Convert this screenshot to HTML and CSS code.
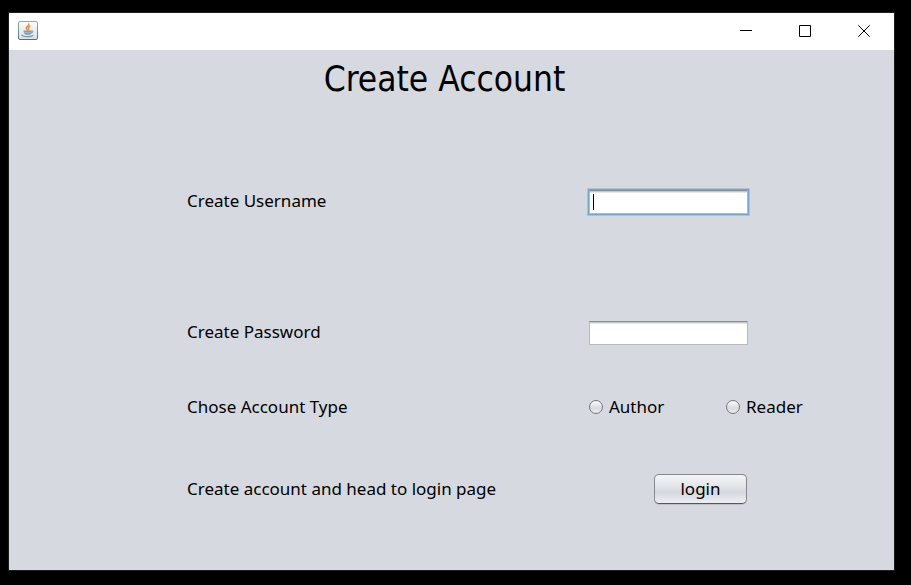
FILE: index.html
```html
<!DOCTYPE html>
<html lang="en">
<head>
<meta charset="utf-8">
<title>Create Account</title>
<link rel="stylesheet" href="styles.css">
</head>
<body>
<div class="window">
  <header class="titlebar">
    <svg class="app-icon" viewBox="0 0 20 19" aria-hidden="true">
      <defs>
        <linearGradient id="tile" x1="0" y1="0" x2="0" y2="1">
          <stop offset="0" stop-color="#fbfbfb"/>
          <stop offset="1" stop-color="#dcdee0"/>
        </linearGradient>
        <linearGradient id="edge" x1="0" y1="0" x2="0" y2="1">
          <stop offset="0" stop-color="#8fa9bb"/>
          <stop offset="1" stop-color="#4f7186"/>
        </linearGradient>
      </defs>
      <rect x=".5" y=".5" width="19" height="18" rx="1.5" fill="url(#tile)" stroke="url(#edge)"/>
      <path d="M10.8 3c.8 1.500-2.600 2.400-2.600 4 0 .9.700 1.300 1.100 2M11.800 5.200c-1.800.7-2.100 1.600-1.300 2.300.6.6.3 1.100-.3 1.600" fill="none" stroke="#ee9145" stroke-width="1.500" stroke-linecap="round"/>
      <path d="M5.500 9.600h8.300c0 2.400-1 3.900-2.300 4.100H7.700C6.400 13.300 5.500 11.800 5.500 9.600z" fill="#829bb0"/>
      <path d="M13.600 10c2-.5 2.100 1.500-.6 2" fill="none" stroke="#7390a8" stroke-width=".9"/>
      <path d="M6.500 11.400h6" stroke="#c7d2dc" stroke-width=".6"/>
      <path d="M3.800 14.200c1.500 2 9.500 1.900 11 .3" fill="none" stroke="#7896ae" stroke-width="1.200" stroke-linecap="round"/>
    </svg>
    <div class="controls">
      <button type="button" class="control" aria-label="Minimize"><svg viewBox="0 0 12 12"><path d="M0 5.500h12"/></svg></button>
      <button type="button" class="control" aria-label="Maximize"><svg viewBox="0 0 12 12"><path d="M.5.5h11v11H.5z"/></svg></button>
      <button type="button" class="control" aria-label="Close"><svg viewBox="0 0 12 12"><path d="M.3.3l11.400 11.400M11.700.3L.3 11.700"/></svg></button>
    </div>
  </header>
  <main class="content">
    <h1>Create Account</h1>
    <form class="form">
      <div class="row row-username">
        <label class="name" for="username">Create Username</label>
        <input class="field" id="username" type="text" placeholder=" " autocomplete="off" autofocus>
      </div>
      <div class="row row-password">
        <label class="name" for="password">Create Password</label>
        <input class="field" id="password" type="password" placeholder=" ">
      </div>
      <div class="row row-type" role="radiogroup" aria-labelledby="type">
        <span class="name" id="type">Chose Account Type</span>
        <div class="options">
          <label class="option"><input type="radio" name="type" value="author">Author</label>
          <label class="option"><input type="radio" name="type" value="reader">Reader</label>
        </div>
      </div>
      <div class="row">
        <span class="name">Create account and head to login page</span>
        <div class="action"><button type="button" class="login">login</button></div>
      </div>
    </form>
  </main>
</div>
</body>
</html>
```
FILE: styles.css
```css
* {
  box-sizing: border-box;
}

body {
  margin: 0;
  min-height: 100vh;
  padding: 12px 16px 14px 8px;
  display: flex;
  background: #000;
  color: #000;
  font-family: Tahoma, "Noto Sans", sans-serif;
  font-size: 17px;
  line-height: 24px;
}

.window {
  flex: 1;
  display: flex;
  flex-direction: column;
  border: 1px solid #1c1c1e;
  background: #d6d9e0;
}

.titlebar {
  display: flex;
  justify-content: space-between;
  align-items: flex-start;
  height: 37px;
  padding: 8px 1px 0 9px;
  background: #fff;
}

.app-icon {
  width: 20px;
  height: 19px;
}

.controls {
  display: flex;
}

.control {
  display: flex;
  align-items: center;
  justify-content: center;
  width: 59px;
  height: 20px;
  padding: 0;
  border: 0;
  background: none;
}

.control svg {
  width: 12px;
  height: 12px;
  fill: none;
  stroke: #000;
}

.content {
  flex: 1;
  padding: 4px 30px 16px 16px;
}

h1 {
  margin: 0;
  font-family: Tahoma, "DejaVu Sans Condensed", sans-serif;
  font-size: 35px;
  line-height: 50px;
  font-weight: 400;
  text-align: center;
}

.form {
  margin-top: 82px;
  padding-left: 162px;
}

.row {
  display: grid;
  grid-template-columns: 402px 1fr;
  align-items: center;
  min-height: 30px;
}

.row-username {
  margin-bottom: 101px;
}

.row-password {
  margin-bottom: 45px;
}

.row-type {
  margin-bottom: 52px;
}

.field {
  width: 159px;
  height: 24px;
  margin: 2px 0 0;
  padding: 0 3px;
  border: 1px solid #b9babb;
  border-top-color: #8c8d90;
  background: linear-gradient(#c5c6c8 0 1px, #e6e7e8 1px 2px, #fff 2px);
  font: inherit;
  outline: 0;
}

.field:focus {
  box-shadow: 0 0 0 1px #73a4d1, 0 0 0 2px #a9c3dc;
}

/* Full-height insertion bar while the focused field is empty. */
.field:placeholder-shown:focus {
  caret-color: transparent;
  background:
    linear-gradient(#000, #000) 3px 3px / 1px 16px no-repeat,
    linear-gradient(#c5c6c8 0 1px, #e6e7e8 1px 2px, #fff 2px);
}

.options {
  display: flex;
}

.option {
  display: flex;
  align-items: center;
  gap: 6px;
  width: 137px;
}

.option input {
  appearance: none;
  width: 14px;
  height: 14px;
  margin: 0;
  border: 1px solid #74767c;
  border-radius: 50%;
  background: linear-gradient(#fbfbfc, #d8dbe1 60%, #eceef2);
}

.option input:checked {
  background: radial-gradient(#222 0 3px, #e4e7ec 4px);
}

.action {
  display: flex;
  justify-content: flex-end;
  width: 158px;
}

.login {
  width: 93px;
  height: 30px;
  padding: 0;
  border: 1px solid #85878d;
  border-bottom-color: #55575c;
  border-radius: 5px;
  background: linear-gradient(#f5f6f8, #dfe1e6 48%, #d5d8de 60%, #eceef2);
  box-shadow: 0 1px 0 #bdc0c6;
  color: inherit;
  font: inherit;
  line-height: 26px;
}
```
